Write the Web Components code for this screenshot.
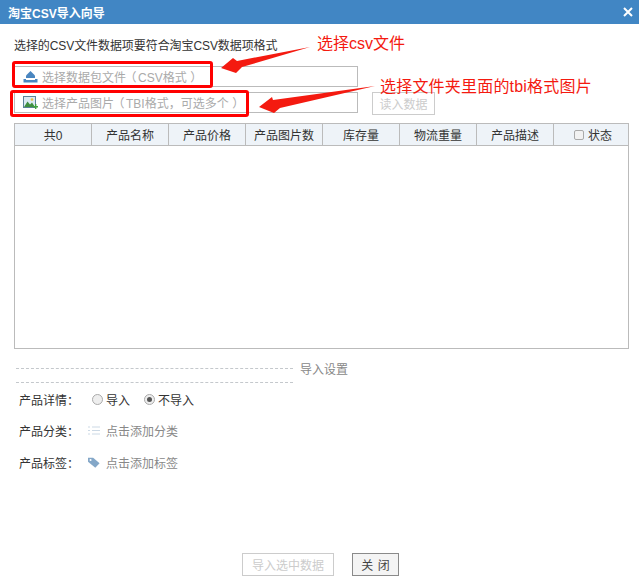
<!DOCTYPE html>
<html lang="zh">
<head>
<meta charset="utf-8">
<title>淘宝CSV导入向导</title>
<style>
  html, body { margin: 0; padding: 0; background: #fff; }
  body { font: 12px "Liberation Sans", "Noto Sans CJK SC", sans-serif; color: #333; }
</style>
</head>
<body>
<import-wizard></import-wizard>

<script>
const FONT = '"Liberation Sans", "Noto Sans CJK SC", sans-serif';

class WizardTitlebar extends HTMLElement {
  constructor() {
    super();
    this.attachShadow({ mode: 'open' }).innerHTML = `
      <style>
        :host { display: flex; align-items: center; justify-content: space-between; height: 24px; padding: 0 6px 0 8px; background: #4186c4; color: #fff; font-size: 12px; font-weight: bold; }
        svg { display: block; }
      </style>
      <slot></slot>
      <svg width="10" height="10" viewBox="0 0 10 10"><path d="M1 1l8 8M9 1l-8 8" stroke="#fff" stroke-width="2"/></svg>
    `;
  }
}

class FileField extends HTMLElement {
  constructor() {
    super();
    this.attachShadow({ mode: 'open' }).innerHTML = `
      <style>
        :host { display: flex; align-items: center; gap: 4px; box-sizing: border-box; width: 344px; height: 21px; padding-left: 8px; border: 1px solid #bbb; color: #aaa; font-size: 12px; white-space: nowrap; }
        ::slotted(svg) { flex: none; display: block; }
      </style>
      <slot name="icon"></slot><slot></slot>
    `;
  }
}

class GridHeader extends HTMLElement {
  constructor() {
    super();
    this.attachShadow({ mode: 'open' }).innerHTML = `
      <style>
        :host { display: flex; align-items: center; justify-content: center; gap: 4px; box-sizing: border-box; border-right: 1px solid #bbb; background: #eef3f8; color: #333; font-size: 12px; }
        :host(:last-child) { border-right: 0; }
        .box { display: none; width: 8px; height: 8px; border: 1px solid #aaa; border-radius: 2px; background: #f2f2f2; }
        :host([check]) { padding-left: 4px; }
        :host([check]) .box { display: block; }
      </style>
      <span class="box"></span><slot></slot>
    `;
  }
}

class ProductGrid extends HTMLElement {
  constructor() {
    super();
    this.attachShadow({ mode: 'open' }).innerHTML = `
      <style>
        :host { display: block; box-sizing: border-box; width: 615px; height: 226px; border: 1px solid #bbb; }
        .head { display: grid; grid-template-columns: repeat(7, 77px) 1fr; height: 21px; border-bottom: 1px solid #bbb; }
      </style>
      <div class="head">
        <grid-header>共0</grid-header>
        <grid-header>产品名称</grid-header>
        <grid-header>产品价格</grid-header>
        <grid-header>产品图片数</grid-header>
        <grid-header>库存量</grid-header>
        <grid-header>物流重量</grid-header>
        <grid-header>产品描述</grid-header>
        <grid-header check>状态</grid-header>
      </div>
    `;
  }
}

class SettingRow extends HTMLElement {
  constructor() {
    super();
    this.attachShadow({ mode: 'open' }).innerHTML = `
      <style>
        :host { display: flex; align-items: center; height: 16px; font-size: 12px; color: #333; }
        .label { width: 68px; flex: none; }
        .body { display: flex; align-items: center; gap: 5px; color: #888; }
      </style>
      <span class="label"><slot name="label"></slot></span>
      <span class="body"><slot></slot></span>
    `;
  }
}

class RadioOption extends HTMLElement {
  constructor() {
    super();
    this.attachShadow({ mode: 'open' }).innerHTML = `
      <style>
        :host { display: inline-flex; align-items: center; gap: 3px; color: #333; font-size: 12px; }
        .dot { box-sizing: border-box; width: 11px; height: 11px; border: 1px solid #aaa; border-radius: 50%; background: #eee; display: flex; align-items: center; justify-content: center; }
        .dot i { display: none; width: 5px; height: 5px; border-radius: 50%; background: #555; }
        :host([checked]) .dot i { display: block; }
      </style>
      <span class="dot"><i></i></span><slot></slot>
    `;
  }
}

class WizardButton extends HTMLElement {
  constructor() {
    super();
    this.attachShadow({ mode: 'open' }).innerHTML = `
      <style>
        :host { display: inline-flex; align-items: center; justify-content: center; box-sizing: border-box; height: 23px; border: 1px solid #ccc; color: #ccc; font-size: 12px; }
        :host([primary]) { border-color: #8a8a8a; background: #f4f4f4; color: #444; word-spacing: 1px; }
      </style>
      <slot></slot>
    `;
  }
}

class ImportWizard extends HTMLElement {
  constructor() {
    super();
    this.attachShadow({ mode: 'open' }).innerHTML = `
      <style>
        :host { display: block; position: relative; width: 639px; height: 587px; overflow: hidden; font-family: ${FONT}; }
        .main { padding: 0 10px 0 14px; }
        .p { font-family: "Noto Sans CJK TC", sans-serif; }
        /* parens sit centred in their em in the reference */
        .open, .shut { display: inline-block; font-feature-settings: "palt"; }
        .open { margin: 0 2px 0 4px; }
        .shut { margin: 0 2px 0 4px; }
        .intro { height: 42px; line-height: 45px; color: #333; font-size: 12px; white-space: nowrap; letter-spacing: -0.08px; }
        .fields { display: grid; grid-template-columns: 344px 1fr; row-gap: 5px; column-gap: 14px; }
        .read { width: 63px; }
        product-grid { margin-top: 8px; }
        .divider { display: flex; align-items: center; gap: 7px; margin: 11px 0 0 2px; height: 16px; color: #888; font-size: 12px; }
        .divider i { width: 277px; border-top: 1px dashed #c4c8cc; }
        .rule { width: 277px; margin: 6px 0 0 2px; border-top: 1px dashed #c4c8cc; }
        .settings { display: flex; flex-direction: column; padding-left: 5px; margin-top: 8px; }
        setting-row + setting-row { margin-top: 15px; }
        setting-row.tags { margin-top: 16px; }
        setting-row svg { margin: 0 1px; }
        .footer { display: flex; gap: 18px; margin: 83px 0 0 228px; }
        .footer .import { width: 92px; }
        .footer .close { width: 47px; }
        /* annotations drawn on top of the screenshot */
        .marks { position: absolute; inset: 0; pointer-events: none; }
        .note { position: absolute; color: #f41a10; font-size: 16px; white-space: nowrap; line-height: 18px; }
        .box { position: absolute; box-sizing: border-box; border: 3px solid #f00; border-radius: 3px; }
      </style>
      <wizard-titlebar>淘宝CSV导入向导</wizard-titlebar>
      <div class="main">
        <div class="intro">选择的CSV文件数据项要符合淘宝CSV数据项格式</div>
        <div class="fields">
          <file-field style="grid-column:1">
            <svg slot="icon" width="15" height="13" viewBox="0 0 15 13"><path d="M7.5 1L12 5.5V8H3V5.5Z" fill="#4a86c0"/><path d="M.5 9H3v1h9V9h2.5v3.5H.5Z" fill="#4a86c0"/></svg>
            <span>选择数据包文件<span class="open">（</span>CSV格式<span class="shut">）</span></span>
          </file-field>
          <span></span>
          <file-field>
            <svg slot="icon" width="15" height="13" viewBox="0 0 15 13"><rect x=".5" y=".5" width="12" height="11" fill="#dbe9f2" stroke="#5b8299"/><path d="M1 11l3.5-5.5 2.5 3 2-2 3 4.5Z" fill="#3f8f3f"/><circle cx="9" cy="3.5" r="1.3" fill="#e8c040"/><path d="M10 10h2V8h1.4v2h1.6v1.5h-1.6V13H12v-1.5h-2Z" fill="#3fa03f"/></svg>
            <span>选择产品图片<span class="open">（</span>TBI格式<span class="p">，</span>可选多个<span class="shut">）</span></span>
          </file-field>
          <wizard-button class="read">读入数据</wizard-button>
        </div>
        <product-grid></product-grid>
        <div class="divider"><i></i><span>导入设置</span></div>
        <div class="rule"></div>
        <div class="settings">
          <setting-row>
            <span slot="label">产品详情<span class="p">：</span></span>
            <radio-option style="margin-left:5px">导入</radio-option>
            <radio-option checked style="margin-left:9px">不导入</radio-option>
          </setting-row>
          <setting-row>
            <span slot="label">产品分类<span class="p">：</span></span>
            <svg width="12" height="9" viewBox="0 0 12 9"><path d="M0 1h2M4 1h8M0 4.5h2M4 4.5h8M0 8h2M4 8h8" stroke="#ccd9e5" stroke-width="1"/></svg>
            <span>点击添加分类</span>
          </setting-row>
          <setting-row class="tags">
            <span slot="label">产品标签<span class="p">：</span></span>
            <svg width="12" height="11" viewBox="0 0 14 12"><path d="M0 0.5H6L13.5 7L8.5 12L0 5Z" fill="#84a7c8"/><circle cx="3" cy="3" r="1.2" fill="#fff"/></svg>
            <span>点击添加标签</span>
          </setting-row>
        </div>
        <div class="footer">
          <wizard-button class="import">导入选中数据</wizard-button>
          <wizard-button class="close" primary>关 闭</wizard-button>
        </div>
      </div>
      <div class="marks">
        <div class="box" style="left:12px;top:61px;width:201px;height:27px"></div>
        <div class="box" style="left:10px;top:90px;width:239px;height:27px"></div>
        <svg width="639" height="587" style="position:absolute;left:0;top:0">
          <polygon points="310,47 237,61 233,58 221,68 236,73 242,67" fill="#f41a10"/>
          <polygon points="375,86 273,100 272,97 259,107 274,113 280,108" fill="#f41a10"/>
        </svg>
        <span class="note" style="left:317px;top:35px">选择csv文件</span>
        <span class="note" style="left:380px;top:78px;letter-spacing:.2px">选择文件夹里面的tbi格式图片</span>
      </div>
    `;
  }
}

customElements.define('wizard-titlebar', WizardTitlebar);
customElements.define('file-field', FileField);
customElements.define('grid-header', GridHeader);
customElements.define('product-grid', ProductGrid);
customElements.define('setting-row', SettingRow);
customElements.define('radio-option', RadioOption);
customElements.define('wizard-button', WizardButton);
customElements.define('import-wizard', ImportWizard);
</script>
</body>
</html>
